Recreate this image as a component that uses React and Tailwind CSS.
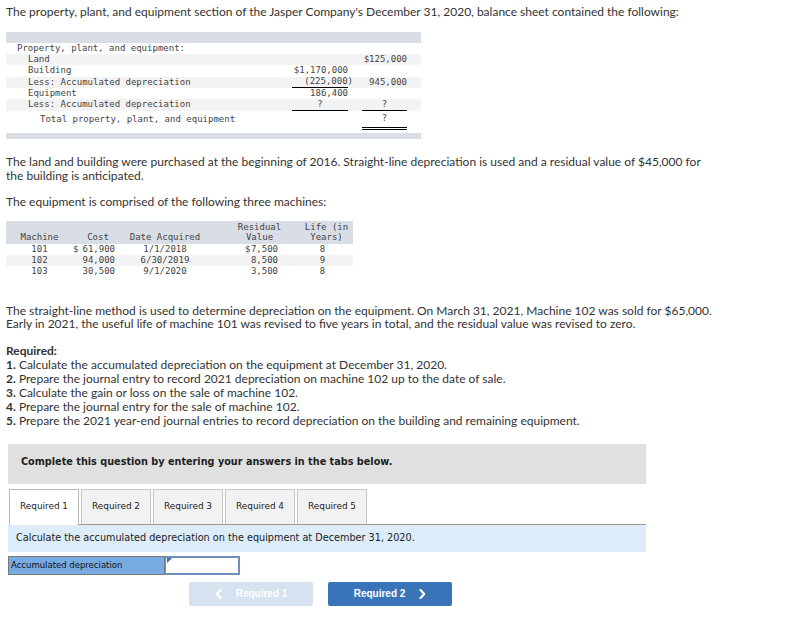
import React from "react";

const sans = { fontFamily: "Lato, 'Open Sans', sans-serif" };

function BRow({ label, indent = 22, c2, c3, stripe, u2, u3, dbl3, h = "h-[11.33px]" }) {
  return (
    <div className={`flex items-center ${h} ${stripe ? "bg-[#f3f3f3]" : "bg-white"}`}>
      <div className="w-[286px] shrink-0 whitespace-pre" style={{ paddingLeft: indent }}>
        {label}
      </div>
      <div className={`w-[56px] shrink-0 h-full flex items-center justify-end ${u2 ? "border-b border-black" : ""}`}>
        {c2}
      </div>
      <div className="w-[14px] shrink-0" />
      <div
        className={`w-[45px] shrink-0 h-full flex items-center justify-end ${u3 ? "border-b border-black" : ""} ${dbl3 ? "border-b-[3px] border-double border-black" : ""}`}
      >
        {c3}
      </div>
    </div>
  );
}

function MRow({ m, d, cost, date, rd, res, life, stripe }) {
  return (
    <div className={`flex items-center h-[11.33px] ${stripe ? "bg-[#f3f3f3]" : "bg-white"}`}>
      <div className="w-[67px] text-center">{m}</div>
      <div className="w-[50px] flex justify-between pr-[8px]">
        <span>{d}</span>
        <span>{cost}</span>
      </div>
      <div className="w-[84px] text-center">{date}</div>
      <div className="w-[93px] flex justify-between pl-[38px] pr-[22px]">
        <span>{rd}</span>
        <span>{res}</span>
      </div>
      <div className="w-[53px] text-center pr-[8px]">{life}</div>
    </div>
  );
}

function Chevron({ left }) {
  return (
    <svg width="7" height="10" viewBox="0 0 7 10" className="shrink-0">
      <path
        d={left ? "M5.5 1 L1.8 5 L5.5 9" : "M1.5 1 L5.2 5 L1.5 9"}
        fill="none"
        stroke="white"
        strokeWidth="2.2"
        strokeLinecap="round"
        strokeLinejoin="round"
      />
    </svg>
  );
}

export default function App() {
  const mono = { fontFamily: "'DejaVu Sans Mono', 'Liberation Mono', monospace" };
  const verdana = { fontFamily: "'DejaVu Sans', Verdana, sans-serif" };
  const arial = { fontFamily: "'Liberation Sans', Arial, sans-serif" };
  return (
    <div className="w-[805px] h-[636px] bg-white text-[#333] overflow-hidden">
      <div className="pl-[6px] pt-[5px] text-[12px] leading-[14px]" style={sans}>
        The property, plant, and equipment section of the Jasper Company's December 31, 2020, balance sheet contained the following:
      </div>

      {/* Balance sheet */}
      <div className="ml-[6px] mt-[13px] w-[415px] text-[9px] text-[#444]" style={mono}>
        <div className="h-[10.7px] bg-[#d9dde6]" />
        <BRow label="Property, plant, and equipment:" indent={11} />
        <BRow label="Land" stripe c3="$125,000" />
        <BRow label="Building" c2="$1,170,000" />
        <BRow
          label="Less: Accumulated depreciation"
          stripe
          u2
          c2={<span className="mr-[-5px]">(225,000)</span>}
          c3="945,000"
        />
        <BRow label="Equipment" c2="186,400" />
        <BRow
          label="Less: Accumulated depreciation"
          stripe
          u2
          u3
          c2={<span className="w-full text-center">?</span>}
          c3={<span className="w-full text-center">?</span>}
        />
        <BRow
          label="Total property, plant, and equipment"
          indent={34}
          h="h-[19px]"
          dbl3
          c3={<span className="w-full text-center">?</span>}
        />
        <div className="h-[3px]" />
        <div className="h-[6px] bg-[#d9dde6]" />
      </div>

      <div className="pl-[6px] pr-[87px] mt-[16px] text-[12px] leading-[14px]" style={sans}>
        The land and building were purchased at the beginning of 2016. Straight-line depreciation is used and a residual value of $45,000 for the building is anticipated.
      </div>
      <div className="pl-[6px] mt-[12px] text-[12px] leading-[14px]" style={sans}>
        The equipment is comprised of the following three machines:
      </div>

      {/* Machines */}
      <div className="ml-[6px] mt-[12.7px] w-[347px] text-[9px] text-[#444]" style={mono}>
        <div className="flex items-end h-[22.3px] bg-[#d9dde6] leading-[10.5px] pb-[1px]">
          <div className="w-[67px] text-center">Machine</div>
          <div className="w-[50px] text-center">Cost</div>
          <div className="w-[84px] text-center">Date Acquired</div>
          <div className="w-[93px] text-center pl-[12px]">
            Residual
            <br />
            Value
          </div>
          <div className="w-[53px] text-center">
            Life (in
            <br />
            Years)
          </div>
        </div>
        <MRow m="101" d="$" cost="61,900" date="1/1/2018" rd="$" res="7,500" life="8" />
        <MRow m="102" cost="94,000" date="6/30/2019" res="8,500" life="9" stripe />
        <MRow m="103" cost="30,500" date="9/1/2020" res="3,500" life="8" />
      </div>

      <div className="pl-[6px] pr-[87px] mt-[26px] text-[12px] leading-[13.7px]" style={sans}>
        The straight-line method is used to determine depreciation on the equipment. On March 31, 2021, Machine 102 was sold for $65,000. Early in 2021, the useful life of machine 101 was revised to five years in total, and the residual value was revised to zero.
      </div>

      <div className="pl-[6px] mt-[12.5px] text-[12px] leading-[14px]" style={sans}>
        <div className="font-bold">Required:</div>
        <div><b>1.</b> Calculate the accumulated depreciation on the equipment at December 31, 2020.</div>
        <div><b>2.</b> Prepare the journal entry to record 2021 depreciation on machine 102 up to the date of sale.</div>
        <div><b>3.</b> Calculate the gain or loss on the sale of machine 102.</div>
        <div><b>4.</b> Prepare the journal entry for the sale of machine 102.</div>
        <div><b>5.</b> Prepare the 2021 year-end journal entries to record depreciation on the building and remaining equipment.</div>
      </div>

      {/* Question box */}
      <div className="ml-[8px] mt-[16px] w-[638px] h-[40px] bg-[#e0e0e0] flex items-center pl-[13px] pb-[2px]" style={verdana}>
        <span className="text-[9.7px] font-bold text-[#222]">
          Complete this question by entering your answers in the tabs below.
        </span>
      </div>

      {/* Tabs */}
      <div className="ml-[8px] mt-[5px] w-[638px]" style={verdana}>
        <div className="flex items-end h-[36px]">
          <div className="w-[1px] h-full" />
          <div className="w-[70px] h-full bg-white border border-b-0 border-[#bbb] flex items-center justify-center text-[8.9px] text-[#222]">
            Required 1
          </div>
          <div className="flex-1 h-full flex items-end border-b border-[#999]">
            {["Required 2", "Required 3", "Required 4", "Required 5"].map((t) => (
              <div
                key={t}
                className="ml-[2px] w-[70px] h-full bg-[#f2f2f2] border border-b-0 border-[#c8c8c8] flex items-center justify-center text-[8.9px] text-[#222]"
              >
                {t}
              </div>
            ))}
          </div>
        </div>
        <div className="h-[27px] bg-[#dcecf9] flex items-center pl-[8px] text-[9.7px] text-[#222]">
          Calculate the accumulated depreciation on the equipment at December 31, 2020.
        </div>
        <div className="mt-[4px] flex h-[19px]">
          <div className="w-[157px] h-full bg-[#78abe2] border border-[#7a7a7a] flex items-center pl-[2px] text-[8.5px] text-[#111]">
            Accumulated depreciation
          </div>
          <div className="relative w-[75px] h-full bg-white border-2 border-[#6f8fba] border-l-[1px]">
            <div className="absolute left-[1px] top-0 w-0 h-0 border-t-[5px] border-t-[#2a6fc9] border-r-[5px] border-r-transparent" />
          </div>
        </div>
        <div className="mt-[7px] flex h-[24px]">
          <div className="ml-[181px] w-[124px] h-full rounded-[2px] bg-[#d6e2ef] flex items-center justify-center gap-[14px] text-white font-bold text-[10px]" style={arial}>
            <Chevron left />
            <span>Required 1</span>
          </div>
          <div className="ml-[15px] w-[124px] h-full rounded-[2px] bg-[#3a74b8] flex items-center justify-center gap-[14px] text-white font-bold text-[10px]" style={arial}>
            <span>Required 2</span>
            <Chevron />
          </div>
        </div>
      </div>
    </div>
  );
}
